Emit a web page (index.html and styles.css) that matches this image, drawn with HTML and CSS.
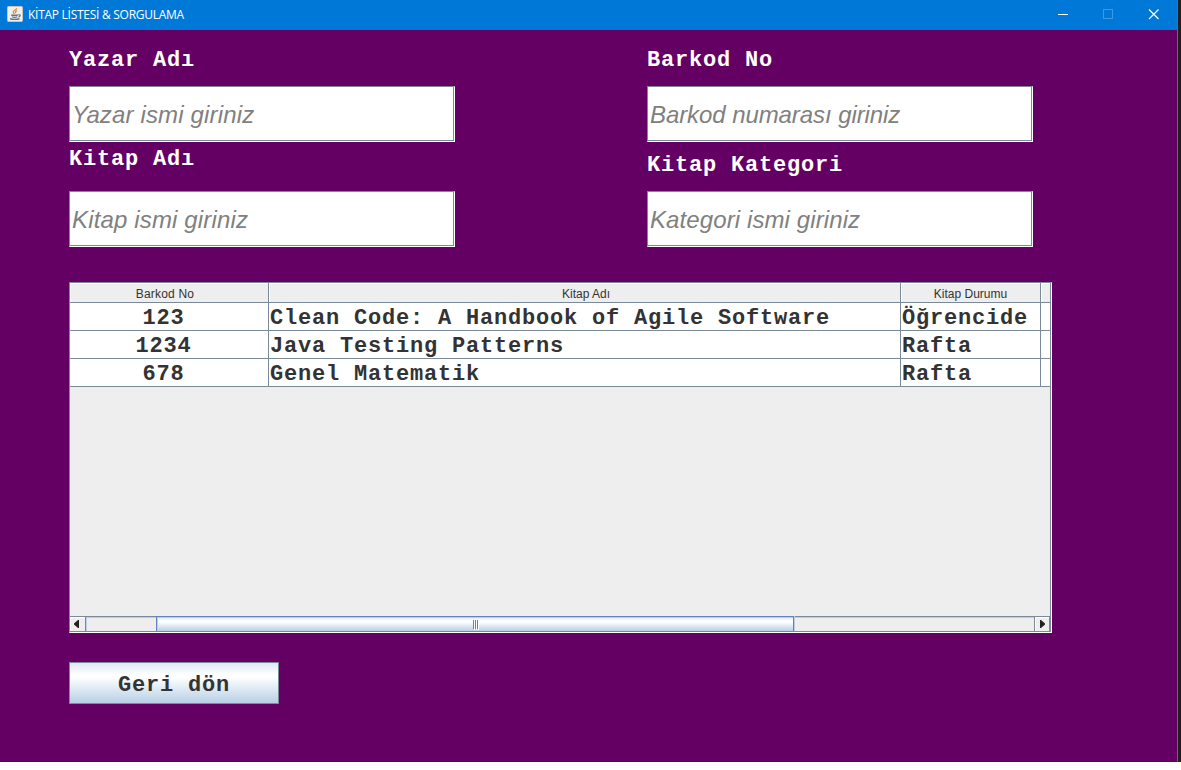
FILE: index.html
```html
<!DOCTYPE html>
<html lang="tr">
<head>
<meta charset="utf-8">
<title>KİTAP LİSTESİ &amp; SORGULAMA</title>
<link rel="stylesheet" href="styles.css">
</head>
<body>
<div class="desktop">
<div class="window">
  <header class="titlebar">
    <svg class="app-icon" width="16" height="16" viewBox="0 0 16 16">
      <rect x=".5" y=".5" width="15" height="15" rx="1" fill="#f1efed" stroke="#c9c5c0"/>
      <path d="M9.6 2.2C9.8 4 6 4.700 6.200 6.300C6.300 7.200 7.300 7.500 7.500 8.400M10.300 4.800C8.300 5.400 8.200 6.200 8.700 7.200" fill="none" stroke="#e8842c" stroke-width="1.200"/>
      <path d="M4.200 8.900C5.500 9.600 9.500 9.600 10.800 8.900M5 10.800C6.500 11.500 9 11.500 10.300 10.800M3 12.600C5 13.700 10.500 13.700 12.500 12.600M11.300 8.800C14 8.300 13.600 10.500 11.500 11.100" fill="none" stroke="#5b7586" stroke-width="1.200"/>
    </svg>
    <h1 class="title">KİTAP LİSTESİ &amp; SORGULAMA</h1>
    <svg class="controls" width="137" height="30" viewBox="0 0 137 30" fill="none" shape-rendering="crispEdges">
      <path d="M18 14.500H28" stroke="#fff"/>
      <rect x="63.500" y="9.500" width="9" height="9" stroke="#3e99e2"/>
      <path d="M109 9.500L118.500 19M118.500 9.500L109 19" stroke="#fff" stroke-width="1.200" shape-rendering="auto"/>
    </svg>
  </header>
  <main class="content">
    <section class="filters">
      <div class="column">
        <label class="label" for="author">Yazar Adı</label>
        <input class="field field-loose" id="author" placeholder="Yazar ismi giriniz">
        <label class="label label-second" for="book">Kitap Adı</label>
        <input class="field field-loose" id="book" placeholder="Kitap ismi giriniz">
      </div>
      <div class="column">
        <label class="label" for="barcode">Barkod No</label>
        <input class="field field-tight" id="barcode" placeholder="Barkod numarası giriniz">
        <label class="label label-second label-low" for="category">Kitap Kategori</label>
        <input class="field field-wide" id="category" placeholder="Kategori ismi giriniz">
      </div>
    </section>
    <section class="scroll-pane">
      <div class="viewport">
        <table class="books">
          <colgroup><col class="col-barcode"><col class="col-name"><col class="col-status"><col class="col-rest"></colgroup>
          <thead><tr><th class="head-barcode">Barkod No</th><th class="head-name">Kitap Adı</th><th>Kitap Durumu</th><th></th></tr></thead>
          <tbody>
            <tr><td class="centered">123</td><td>Clean Code: A Handbook of Agile Software</td><td>Öğrencide</td><td></td></tr>
            <tr><td class="centered">1234</td><td>Java Testing Patterns</td><td>Rafta</td><td></td></tr>
            <tr><td class="centered">678</td><td>Genel Matematik</td><td>Rafta</td><td></td></tr>
          </tbody>
        </table>
      </div>
      <div class="scrollbar">
        <div class="arrow arrow-left"><svg width="5" height="8" viewBox="0 0 5 8"><path d="M5 0V8H4L0 4.500V3.500L4 0Z" fill="#222"/></svg></div>
        <div class="track">
          <div class="thumb"><i class="grip"></i><i class="grip"></i><i class="grip"></i></div>
        </div>
        <div class="arrow arrow-right"><svg width="5" height="8" viewBox="0 0 5 8"><path d="M0 0V8H1L5 4.500V3.500L1 0Z" fill="#222"/></svg></div>
      </div>
    </section>
    <button class="back" type="button">Geri dön</button>
  </main>
</div>
</div>
</body>
</html>
```
FILE: styles.css
```css
* { box-sizing: border-box; }
body { margin: 0; background: #fff; overflow: hidden; }
.desktop { height: 762px; padding-right: 3px; background: #1f1f1f; }
.window {
  height: 762px;
  border-right: 1px solid #1a7bd0;
  background: #640064;
}
.titlebar {
  display: flex;
  align-items: center;
  height: 30px;
  padding-left: 7px;
  background: #0078d7;
}
.app-icon { margin-top: -2px; }
.title {
  flex: 1;
  margin: 0 0 0 5px;
  color: #fff;
  font: 12px/30px "Open Sans", "Noto Sans", sans-serif;
  letter-spacing: -0.27px;
  white-space: nowrap;
}
.content { padding: 16px 0 0 69px; }
.filters { display: flex; gap: 192px; }
.column { display: flex; flex-direction: column; width: 386px; }
.label, .books td, .back {
  font: bold 22px/28px "Liberation Mono", monospace;
  letter-spacing: 0.798px;
  white-space: pre;
}
.label { height: 40px; padding-top: 1px; color: #fff; }
.label-second { height: 49px; padding-top: 4px; }
.label-low { padding-top: 10px; }
.field {
  width: 386px;
  height: 56px;
  padding: 2px 2px 0;
  border: 1px solid #7a8a99;
  border-right-color: #fff;
  border-bottom-color: #fff;
  border-radius: 0;
  background: #fff;
  box-shadow: inset -1px -1px #7a8a99;
  font: italic 24px "Liberation Sans", sans-serif;
  outline: 0;
}
.field-loose { letter-spacing: 0.15px; }
.field-tight { letter-spacing: -0.08px; }
.field-wide { letter-spacing: 0.1px; }
.field::placeholder { color: #808080; opacity: 1; }
.scroll-pane {
  width: 983px;
  height: 351px;
  margin-top: 35px;
  border: 1px solid #7a8a99;
  border-right-color: #fff;
  border-bottom-color: #fff;
  background: #eee;
}
.viewport { height: 333px; border-right: 1px solid #7a8a99; }
.books { width: 980px; table-layout: fixed; border-collapse: separate; border-spacing: 0; }
.col-barcode { width: 199px; }
.col-name { width: 632px; }
.col-status { width: 140px; }
.col-rest { width: 9px; }
.books th {
  height: 20px;
  padding: 3px 0 0;
  border-right: 1px solid #7a8a99;
  border-bottom: 1px solid #7a8a99;
  box-shadow: inset 1px 1px #fff;
  color: #333;
  font: 12px/16px "Liberation Sans", sans-serif;
}
.books .head-barcode { padding-right: 8px; letter-spacing: 0.2px; }
.books .head-name { padding-left: 3px; }
.books td {
  height: 28px;
  padding: 4px 0 0 1px;
  border-right: 1px solid #7a8a99;
  border-bottom: 1px solid #7a8a99;
  background: #fff;
  color: #333;
  line-height: 23px;
}
.books th:last-child, .books td:last-child { border-right: 0; }
.books .centered { padding-right: 12px; text-align: center; }
.scrollbar {
  display: flex;
  height: 16px;
  border: solid #7a8a99;
  border-width: 1px 1px 1px 0;
}
.arrow {
  display: flex;
  align-items: center;
  justify-content: center;
  width: 16px;
  box-shadow: inset 1px 1px #fff;
}
.arrow-left { padding-right: 2px; border-right: 1px solid #7a8a99; }
.arrow-right { border-left: 1px solid #7a8a99; border-right: 1px solid #7a8a99; }
.track { flex: 1; padding-left: 70px; box-shadow: inset 1px 1px #b8cfe5; }
.thumb {
  display: flex;
  align-items: center;
  justify-content: center;
  gap: 1px;
  width: 638px;
  height: 15px;
  margin-top: -1px;
  border: 1px solid #6382bf;
  border-bottom: 0;
  background: linear-gradient(#dde8f3, #fff 30%, #fff 35%, #b8cfe5);
  box-shadow: inset 1px 1px #b8cfe5, 1px 0 #b8cfe5;
}
.grip { width: 1px; height: 9px; background: #6382bf; box-shadow: 1px 1px #fff; }
.back {
  display: block;
  width: 210px;
  height: 42px;
  margin-top: 29px;
  padding: 5px 0 0;
  border: 1px solid #7a8a99;
  border-radius: 0;
  background: linear-gradient(#dde8f3, #fff 30%, #fff 35%, #b8cfe5);
  color: #333;
}
```
